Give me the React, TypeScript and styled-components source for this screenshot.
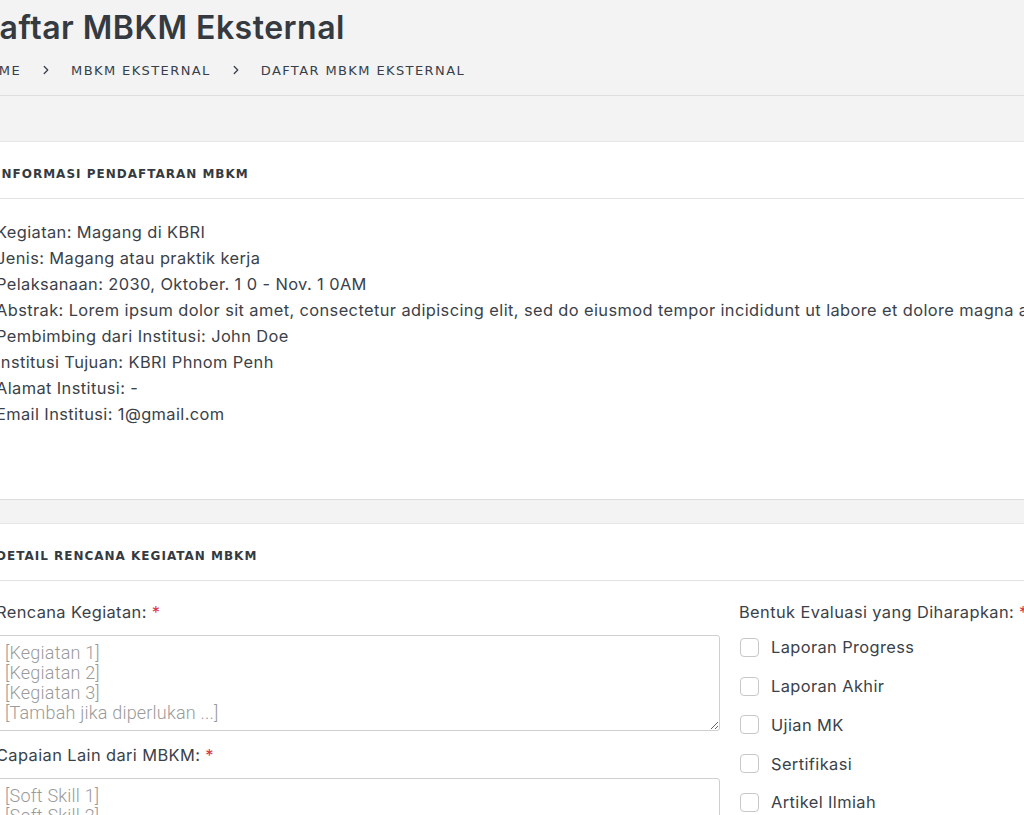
import React from 'react';
import styled, {createGlobalStyle} from 'styled-components';

const GlobalStyle = createGlobalStyle`
    html, body {
        margin: 0;
        padding: 0;
        background-color: #f3f3f3;
        overflow: hidden;
    }
    body {
        font-family: Inter, "Liberation Sans", sans-serif;
        color: #3a4149;
    }
`

const info = [
    'Kegiatan: Magang di KBRI',
    'Jenis: Magang atau praktik kerja',
    'Pelaksanaan: 2030, Oktober. 1 0 - Nov. 1 0AM',
    'Abstrak: Lorem ipsum dolor sit amet, consectetur adipiscing elit, sed do eiusmod tempor incididunt ut labore et dolore magna aliqua.',
    'Pembimbing dari Institusi: John Doe',
    'Institusi Tujuan: KBRI Phnom Penh',
    'Alamat Institusi: -',
    'Email Institusi: 1@gmail.com',
]

const evaluasi = ['Laporan Progress', 'Laporan Akhir', 'Ujian MK', 'Sertifikasi', 'Artikel Ilmiah']

const Chevron = () => (
    <svg width="14" height="14" viewBox="0 0 24 24" fill="none" stroke="currentColor"
         strokeWidth="2.2" strokeLinecap="round" strokeLinejoin="round">
        <path d="m9 18 6-6-6-6"/>
    </svg>
)

export default function App() {
    return (
        <>
            <GlobalStyle/>
            <StyledPage>
                <StyledHeader>
                    <StyledTitle>Daftar MBKM Eksternal</StyledTitle>
                    <StyledCrumbs>
                        <span>Home</span>
                        <Chevron/>
                        <span>MBKM Eksternal</span>
                        <Chevron/>
                        <span>Daftar MBKM Eksternal</span>
                    </StyledCrumbs>
                </StyledHeader>

                <StyledContent>
                    <StyledCard>
                        <StyledCardHeader>Informasi Pendaftaran MBKM</StyledCardHeader>
                        <StyledInfoBody>
                            {info.map(line => <StyledInfoLine key={line}>{line}</StyledInfoLine>)}
                        </StyledInfoBody>
                    </StyledCard>

                    <StyledCard>
                        <StyledCardHeader>Detail Rencana Kegiatan MBKM</StyledCardHeader>
                        <StyledFormBody>
                            <StyledColumn>
                                <StyledLabel>Rencana Kegiatan: <em>*</em></StyledLabel>
                                <StyledTextarea rows={4}
                                                placeholder={'[Kegiatan 1]\n[Kegiatan 2]\n[Kegiatan 3]\n[Tambah jika diperlukan ...]'}/>
                                <StyledLabel>Capaian Lain dari MBKM: <em>*</em></StyledLabel>
                                <StyledTextarea rows={4}
                                                placeholder={'[Soft Skill 1]\n[Soft Skill 2]\n[Soft Skill 3]\n[Tambah jika diperlukan ...]'}/>
                            </StyledColumn>
                            <StyledColumn>
                                <StyledLabel>Bentuk Evaluasi yang Diharapkan: <em>*</em></StyledLabel>
                                <StyledChecks>
                                    {evaluasi.map(item => (
                                        <StyledCheckRow key={item}>
                                            <StyledCheckbox type="checkbox"/>
                                            {item}
                                        </StyledCheckRow>
                                    ))}
                                </StyledChecks>
                            </StyledColumn>
                        </StyledFormBody>
                    </StyledCard>
                </StyledContent>
            </StyledPage>
        </>
    )
}

const StyledPage = styled.div`
    margin-left: -24px;
    width: 1200px;
`
const StyledHeader = styled.header`
    padding: 8px 0 15px 0;
    border-bottom: 1px solid #dedede;
`
const StyledTitle = styled.h1`
    margin: 0;
    font-size: 32px;
    line-height: 40px;
    font-weight: 600;
    letter-spacing: 0.5px;
    color: #343a40;
`
const StyledCrumbs = styled.nav`
    display: flex;
    align-items: center;
    gap: 17px;
    margin-top: 12px;
    height: 20px;
    font-family: "DejaVu Sans", sans-serif;
    font-size: 13px;
    letter-spacing: 1.4px;
    text-transform: uppercase;
    color: #36404a;

    svg {
        margin: 0 1px;
    }
`
const StyledContent = styled.main`
    padding-top: 45px;
    display: flex;
    flex-direction: column;
    gap: 23px;
`
const StyledCard = styled.section`
    background-color: #ffffff;
    border-top: 1px solid #e6e6e6;
    border-bottom: 1px solid #dcdcdc;
`
const StyledCardHeader = styled.h2`
    box-sizing: border-box;
    margin: 0;
    padding: 7px 20px 0 20px;
    height: 57px;
    display: flex;
    align-items: center;
    border-bottom: 1px solid #e2e2e2;
    font-family: "DejaVu Sans", sans-serif;
    font-size: 12px;
    font-weight: 700;
    letter-spacing: 1px;
    text-transform: uppercase;
    color: #343a40;
`
const StyledInfoBody = styled.div`
    padding: 20px 20px 72px 20px;
`
const StyledInfoLine = styled.p`
    margin: 0;
    font-size: 16.4px;
    line-height: 26px;
    letter-spacing: 0.4px;
    white-space: nowrap;
`
const StyledFormBody = styled.div`
    display: grid;
    grid-template-columns: 724px 1fr;
    gap: 19px;
    padding: 19px 20px 20px 20px;
`
const StyledColumn = styled.div`
    display: flex;
    flex-direction: column;
`
const StyledLabel = styled.label`
    font-size: 16.4px;
    line-height: 24px;
    letter-spacing: 0.4px;
    white-space: nowrap;

    em {
        font-style: normal;
        color: #dc3545;
    }
`
const StyledTextarea = styled.textarea`
    box-sizing: border-box;
    width: 100%;
    height: 96px;
    margin: 11px 0 12px 0;
    padding: 7px 8px;
    border: 1px solid #cfcfcf;
    border-radius: 3px;
    font-family: Roboto, sans-serif;
    font-weight: 300;
    font-size: 18px;
    line-height: 20px;
    letter-spacing: 0.2px;
    color: #495057;

    &::placeholder {
        color: #9a9a9a;
    }
`
const StyledChecks = styled.div`
    display: flex;
    flex-direction: column;
    margin-top: 4px;
`
const StyledCheckRow = styled.label`
    display: flex;
    align-items: center;
    gap: 12px;
    height: 38.75px;
    font-size: 16.4px;
    letter-spacing: 0.4px;
    color: #3a4149;
`
const StyledCheckbox = styled.input`
    appearance: none;
    flex: none;
    margin: 0 0 0 1px;
    width: 19px;
    height: 19px;
    border: 1px solid #c8c8c8;
    border-radius: 4px;
    background: #fff;
`
